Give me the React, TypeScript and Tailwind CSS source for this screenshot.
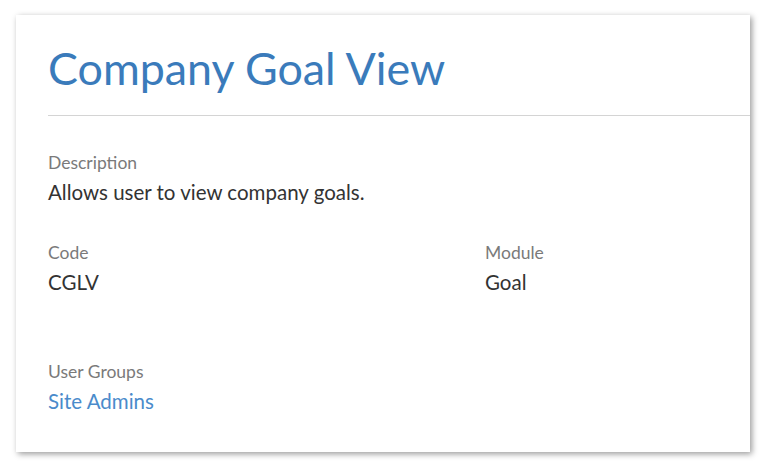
export default function App() {
  return (
    <div className="min-h-screen bg-white pt-[15px] pl-[16px]" style={{ fontFamily: 'Lato, "Open Sans", sans-serif' }}>
      <div className="w-[734px] h-[437px] bg-white shadow-[2px_2px_6px_rgba(0,0,0,0.4)] pl-[32px]">
        <h1 className="pt-[25px] pb-[19px] text-[44.8px] leading-[56px] text-[#3a7bbb] border-b border-[#d4d4d4]">
          Company Goal View
        </h1>

        <div className="pt-[34px]">
          <div className="text-[17.5px] leading-[26px] text-[#7a7a7a]">Description</div>
          <div className="text-[20.5px] leading-[32px] text-[#333]">Allows user to view company goals.</div>
        </div>

        <div className="grid grid-cols-[437px_1fr] pt-[32px]">
          <div>
            <div className="text-[17.5px] leading-[26px] text-[#7a7a7a]">Code</div>
            <div className="text-[20.5px] leading-[32px] text-[#333]">CGLV</div>
          </div>
          <div>
            <div className="text-[17.5px] leading-[26px] text-[#7a7a7a]">Module</div>
            <div className="text-[20.5px] leading-[32px] text-[#333]">Goal</div>
          </div>
        </div>

        <div className="pt-[61px]">
          <div className="text-[17.5px] leading-[26px] text-[#7a7a7a]">User Groups</div>
          <div className="text-[20.5px] leading-[32px] text-[#4a8bcb]">Site Admins</div>
        </div>
      </div>
    </div>
  )
}
